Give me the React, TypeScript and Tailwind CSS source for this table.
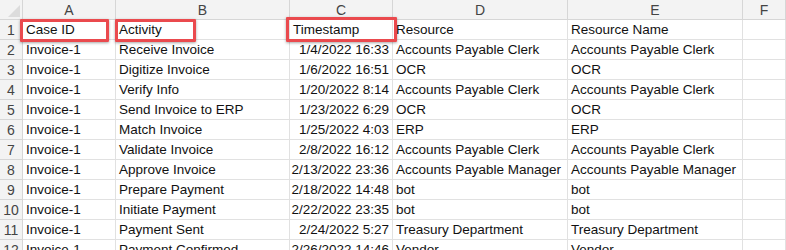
import React from "react";

const rows: string[][] = [
  ["Case ID", "Activity", "Timestamp", "Resource", "Resource Name"],
  ["Invoice-1", "Receive Invoice", "1/4/2022 16:33", "Accounts Payable Clerk", "Accounts Payable Clerk"],
  ["Invoice-1", "Digitize Invoice", "1/6/2022 16:51", "OCR", "OCR"],
  ["Invoice-1", "Verify Info", "1/20/2022 8:14", "Accounts Payable Clerk", "Accounts Payable Clerk"],
  ["Invoice-1", "Send Invoice to ERP", "1/23/2022 6:29", "OCR", "OCR"],
  ["Invoice-1", "Match Invoice", "1/25/2022 4:03", "ERP", "ERP"],
  ["Invoice-1", "Validate Invoice", "2/8/2022 16:12", "Accounts Payable Clerk", "Accounts Payable Clerk"],
  ["Invoice-1", "Approve Invoice", "2/13/2022 23:36", "Accounts Payable Manager", "Accounts Payable Manager"],
  ["Invoice-1", "Prepare Payment", "2/18/2022 14:48", "bot", "bot"],
  ["Invoice-1", "Initiate Payment", "2/22/2022 23:35", "bot", "bot"],
  ["Invoice-1", "Payment Sent", "2/24/2022 5:27", "Treasury Department", "Treasury Department"],
  ["Invoice-1", "Payment Confirmed", "2/26/2022 14:46", "Vendor", "Vendor"],
];

const cols = ["A", "B", "C", "D", "E", "F"];

export default function App() {
  return (
    <div
      className="relative w-[786px] h-[250px] overflow-hidden bg-white"
      style={{ fontFamily: '"Liberation Sans", Arial, sans-serif' }}
    >
      <div className="grid grid-cols-[23px_93px_174px_103px_175px_175px_1fr] auto-rows-[20px] text-[13.5px] text-[#111]">
        <div className="relative bg-[#f3f3f3] border-r border-b border-[#d6d6d6]">
          <svg width="23" height="20" className="absolute inset-0">
            <polygon points="20,5 20,17 8,17" fill="#dcdcdc" />
          </svg>
        </div>
        {cols.map((c) => (
          <div
            key={c}
            className="bg-[#f3f3f3] border-r border-b border-[#d6d6d6] flex items-center justify-center pt-[1px] text-[14px] text-[#444]"
          >
            {c}
          </div>
        ))}
        {rows.map((r, i) => (
          <React.Fragment key={i}>
            <div className="bg-[#f3f3f3] border-r border-b border-[#d6d6d6] flex items-end justify-center text-[14px] text-[#444] leading-[18px]">
              {i + 1}
            </div>
            {r.map((v, j) => (
              <div
                key={j}
                className={
                  "border-r border-b border-[#e1e1e1] px-[3px] flex items-end leading-[18px] whitespace-nowrap overflow-visible " +
                  (j === 2 && i > 0 ? "justify-end" : "justify-start")
                }
              >
                {v}
              </div>
            ))}
            <div className="border-r border-b border-[#e1e1e1]" />
          </React.Fragment>
        ))}
      </div>
      <div className="absolute left-[20px] top-[19px] w-[89px] h-[23px] border-[3px] border-[#ea4a4e] rounded-[1px] shadow-[0_1px_3px_rgba(0,0,0,0.35)]" />
      <div className="absolute left-[115px] top-[19px] w-[81px] h-[23px] border-[3px] border-[#ea4a4e] rounded-[1px] shadow-[0_1px_3px_rgba(0,0,0,0.35)]" />
      <div className="absolute left-[286px] top-[17px] w-[111px] h-[25px] border-[3px] border-[#ea4a4e] rounded-[1px] shadow-[0_1px_3px_rgba(0,0,0,0.35)]" />
    </div>
  );
}
